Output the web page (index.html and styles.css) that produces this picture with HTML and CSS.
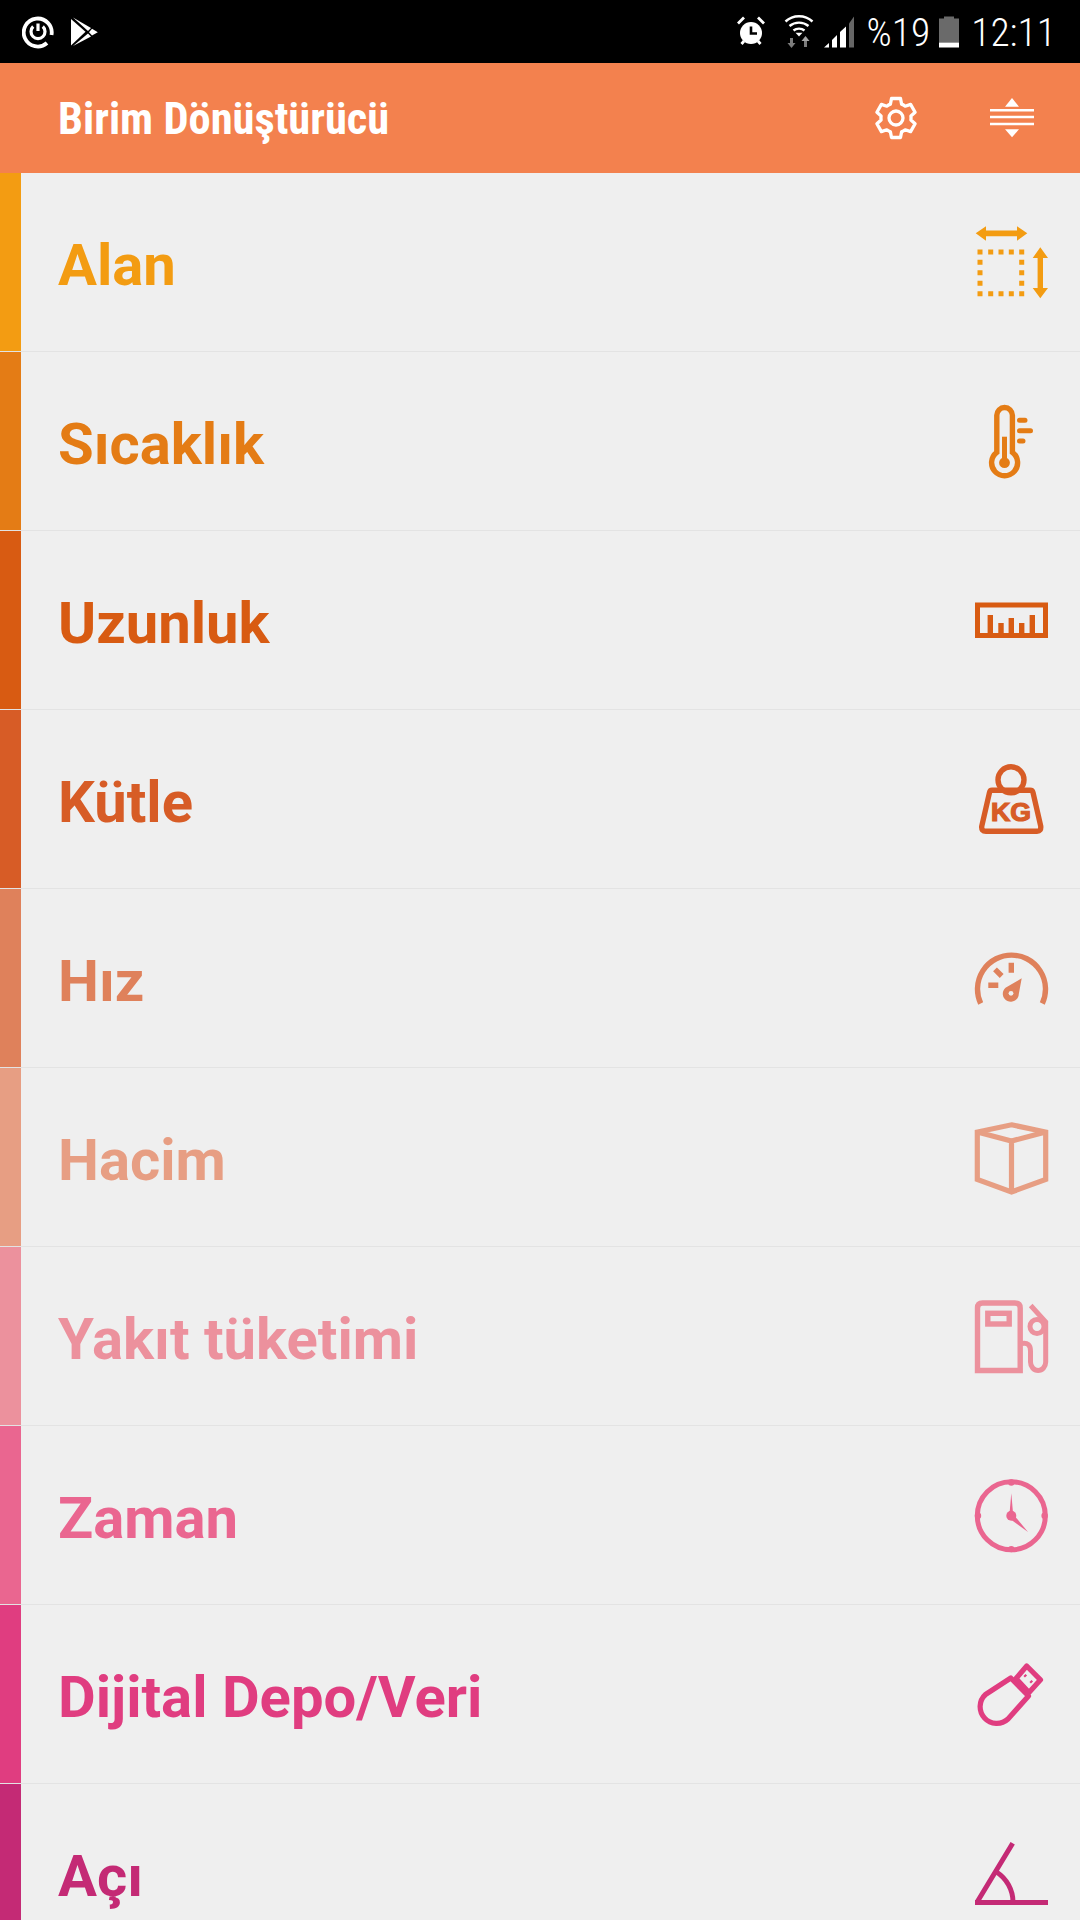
FILE: index.html
```html
<!DOCTYPE html>
<html lang="en">

<head>
  <meta charset="UTF-8">
  <meta name="viewport" content="width=device-width, initial-scale=1.0">
  <title>Birim Dönüştürücü</title>
  <link rel="stylesheet" href="styles.css">
</head>

<body>

  <div class="status-bar">
    <div class="status-left">
      <svg class="st-sync" width="32" height="36" viewBox="0 0 32 36">
        <path d="M25 29A14 14 0 1 1 29.500 21" fill="none" stroke="#fff" stroke-width="3.800"/>
        <path d="M11.200 12.500A7 7 0 1 0 20.800 12.500" fill="none" stroke="#fff" stroke-width="3.200"/>
        <path d="M16 9.500V17" fill="none" stroke="#fff" stroke-width="3.200"/>
      </svg>
      <svg class="st-play" width="30" height="36" viewBox="0 0 30 36">
        <polygon points="1,5 15.500,17.800 1,31.500" fill="#fff"/>
        <polygon points="3,3.500 21,14 18,17" fill="#fff"/>
        <polygon points="3,32 18,19.500 21,22.500" fill="#fff"/>
        <polygon points="22,14.800 27.800,18.200 22,21.500 19,18.200" fill="#fff"/>
      </svg>
    </div>
    <div class="status-right">
      <svg class="st-alarm" width="30" height="36" viewBox="0 0 30 36">
        <circle cx="15" cy="19" r="11" fill="#fff"/>
        <path d="M15 12.500V19.500H21" fill="none" stroke="#000" stroke-width="2.600"/>
        <path d="M2 9.500L8 3.500M28 9.500L22 3.500M5.500 30L8 27M24.500 30L22 27" fill="none" stroke="#fff" stroke-width="2.800"/>
      </svg>
      <svg class="st-wifi" width="34" height="36" viewBox="0 0 34 36">
        <path d="M3.500 7.500C11 .5 23 .5 30.500 7.500M7.500 12C13 7.500 21 7.500 26.500 12M11.500 16.500C14.500 14 19.500 14 22.500 16.500" fill="none" stroke="#fff" stroke-width="2.400"/>
        <polygon points="17,22.500 13.500,18.800 20.500,18.800" fill="#fff"/>
        <path d="M9.500 24V32M23.500 25V33" fill="none" stroke="#7c7c7c" stroke-width="3"/>
        <polygon points="5.500,29 13.500,29 9.500,34" fill="#7c7c7c"/>
        <polygon points="19.500,27 27.500,27 23.500,22" fill="#a5a5a5"/>
      </svg>
      <svg class="st-signal" width="34" height="36" viewBox="0 0 34 36">
        <polygon points="2,33.500 7,29 7,33.500" fill="#fff"/>
        <polygon points="10,33.500 10,26 15,21 15,33.500" fill="#fff"/>
        <polygon points="18,33.500 18,18 24,12.500 24,33.500" fill="#fff"/>
        <polygon points="27,33.500 27,9.500 32,2.500 32,33.500" fill="#666"/>
      </svg>
      <span class="st-text st-percent">%19</span>
      <svg class="st-battery" width="20" height="36" viewBox="0 0 20 36">
        <rect x="5" y="2.500" width="10" height="3" fill="#6a6a6a"/>
        <rect x="0" y="4.500" width="20" height="24" fill="#6a6a6a"/>
        <rect x="0" y="28.500" width="20" height="5" fill="#fff"/>
      </svg>
      <span class="st-text st-time">12:11</span>
    </div>
  </div>

  <div class="app-bar">
    <h1 class="app-title">Birim Dönüştürücü</h1>
    <svg class="bar-gear" width="46" height="46" viewBox="-23 -23 46 46" fill="none" stroke="#fff" stroke-width="3.300" stroke-linejoin="round">
      <path d="M-5.600 -13.900L-4.500 -19.500H4.500L5.600 -13.900A15 15 0 0 1 9.200 -11.800L14.600 -13.600L19.100 -5.800L14.900 -2.100A15 15 0 0 1 14.900 2.100L19.100 5.800L14.600 13.600L9.200 11.800A15 15 0 0 1 5.600 13.900L4.500 19.500H-4.500L-5.600 13.900A15 15 0 0 1 -9.200 11.800L-14.600 13.600L-19.100 5.800L-14.900 2.100A15 15 0 0 1 -14.900 -2.100L-19.100 -5.800L-14.600 -13.600L-9.200 -11.800A15 15 0 0 1 -5.600 -13.900Z"/>
      <circle r="7"/>
    </svg>
    <svg class="bar-sort" width="44" height="40" viewBox="0 0 44 40">
      <polygon points="22,0 15,8.700 29,8.700" fill="#fff"/>
      <path d="M0 12.300H44M0 19H44M0 26H44" stroke="#fff" stroke-width="2.600"/>
      <polygon points="15,31.300 29,31.300 22,39.300" fill="#fff"/>
    </svg>
  </div>

  <div class="list">

    <div class="row c-alan">
      <div class="stripe"></div>
      <span class="row-name">Alan</span>
      <svg class="row-icon" width="80" height="80" viewBox="0 0 80 80" fill="currentColor">
        <polygon points="3.700,11.300 14,4.300 14,8.600 45,8.600 45,4.300 55.300,11.300 45,18.700 45,14.200 14,14.200 14,18.700"/>
        <polygon points="68.300,25.300 76,36 71,36 71,66 76,66 68.300,76.300 60.700,66 65.600,66 65.600,36 60.700,36"/>
        <path d="M8 30h.01M18.700 30h.01M29 30h.01M39.300 30h.01M49.700 30h.01M8 40.300h.01M49.700 40.300h.01M8 50.700h.01M49.700 50.700h.01M8 61.300h.01M49.700 61.300h.01M8 71.700h.01M18.700 71.700h.01M29 71.700h.01M39.300 71.700h.01M49.700 71.700h.01" stroke="currentColor" stroke-width="5" stroke-linecap="square"/>
      </svg>
    </div>

    <div class="row c-sicaklik">
      <div class="stripe"></div>
      <span class="row-name">Sıcaklık</span>
      <svg class="row-icon" width="80" height="80" viewBox="0 0 80 80" fill="none" stroke="currentColor" stroke-width="5.400">
        <path d="M24.800 51.300V14.300a7.800 7.800 0 0 1 15.600 0V51.300A13 13 0 1 1 24.800 51.300Z"/>
        <path d="M32.500 35.700V61" stroke-width="5"/>
        <circle cx="32.500" cy="61.700" r="5.400" fill="currentColor" stroke="none"/>
        <path d="M47.500 19.300H53M47.500 29.700H58.500M47.500 40H51" stroke-width="5" stroke-linecap="round"/>
      </svg>
    </div>

    <div class="row c-uzunluk">
      <div class="stripe"></div>
      <span class="row-name">Uzunluk</span>
      <svg class="row-icon" width="80" height="80" viewBox="0 0 80 80" fill="none" stroke="currentColor" stroke-width="5">
        <rect x="5.500" y="25" width="68" height="30.500"/>
        <path d="M18.300 35V56M29 43V56M39.300 38V56M49.700 43V56M60.300 35V56" stroke-width="5.400"/>
      </svg>
    </div>

    <div class="row c-kutle">
      <div class="stripe"></div>
      <span class="row-name">Kütle</span>
      <svg class="row-icon" width="80" height="80" viewBox="0 0 80 80" fill="none" stroke="currentColor" stroke-width="5.400">
        <circle cx="39" cy="20.800" r="13"/>
        <path d="M20 31.300H58Q60.500 31.300 61 33.500L68.700 67Q69.300 72.300 65 72.300H14Q9 72.300 9.800 67L17.500 33.500Q18 31.300 20 31.300Z" stroke-linejoin="round"/>
        <text class="kg" x="19" y="62" textLength="40" lengthAdjust="spacingAndGlyphs">KG</text>
      </svg>
    </div>

    <div class="row c-hiz">
      <div class="stripe"></div>
      <span class="row-name">Hız</span>
      <svg class="row-icon" width="80" height="80" viewBox="0 0 80 80" fill="none" stroke="currentColor" stroke-width="5.400">
        <path d="M8.700 65.500A34 34 0 1 1 70.300 65.500"/>
        <path d="M39.300 24.700V34.700M23 31.300L29.700 38M16.300 47.300H26.300"/>
        <path d="M49.700 40.300L46.800 56A8 8 0 1 1 33.500 49.800Z" fill="currentColor" stroke="none"/>
        <circle class="hole" cx="39" cy="55.300" r="2.400"/>
      </svg>
    </div>

    <div class="row c-hacim">
      <div class="stripe"></div>
      <span class="row-name">Hacim</span>
      <svg class="row-icon" width="80" height="80" viewBox="0 0 80 80" fill="none" stroke="currentColor" stroke-width="5.200">
        <path d="M39.500 7.800L73.700 15V62.500L39.500 75L5.300 62.500V15ZM5.300 15L39.500 24L73.700 15M39.500 24V75"/>
      </svg>
    </div>

    <div class="row c-yakit">
      <div class="stripe"></div>
      <span class="row-name">Yakıt tüketimi</span>
      <svg class="row-icon" width="80" height="80" viewBox="0 0 80 80" fill="none" stroke="currentColor" stroke-width="5.400">
        <path d="M5.500 74.500V12Q5.500 7 10.500 7H43Q48.200 7 48.200 12V74.500Z"/>
        <rect x="15.800" y="17.300" width="21.400" height="10.700"/>
        <path d="M50 47.500Q58.500 46 58.500 55V66A7.600 8.500 0 0 0 73.700 66V26L58.700 9.500" stroke-width="5"/>
        <circle cx="65" cy="30.500" r="7" stroke-width="5"/>
      </svg>
    </div>

    <div class="row c-zaman">
      <div class="stripe"></div>
      <span class="row-name">Zaman</span>
      <svg class="row-icon" width="80" height="80" viewBox="0 0 80 80" fill="currentColor">
        <circle cx="39.300" cy="40.800" r="34" fill="none" stroke="currentColor" stroke-width="5"/>
        <circle cx="39.300" cy="7.500" r="3.200"/>
        <circle cx="72.600" cy="40.800" r="3.200"/>
        <circle cx="39.300" cy="74.100" r="3.200"/>
        <circle cx="6" cy="40.800" r="3.200"/>
        <circle cx="39.300" cy="40.800" r="5"/>
        <polygon points="39.300,18.200 41.200,40 37.400,40"/>
        <polygon points="56,57 37.500,43.500 41,39"/>
      </svg>
    </div>

    <div class="row c-dijital">
      <div class="stripe"></div>
      <span class="row-name">Dijital Depo/Veri</span>
      <svg class="row-icon" width="80" height="80" viewBox="0 0 80 80" fill="none" stroke="currentColor" stroke-width="5.200" stroke-linejoin="round">
        <path d="M38.800 24L56.500 42L36 65A16.500 16.500 0 0 1 13.500 40.500Z"/>
        <path d="M54.700 12L68.500 25.800L57 38.500L44 24.500Z"/>
        <path d="M52.500 21L54 22.500M58.500 27L60 28.500" stroke-width="3"/>
      </svg>
    </div>

    <div class="row c-aci">
      <div class="stripe"></div>
      <span class="row-name">Açı</span>
      <svg class="row-icon" width="80" height="80" viewBox="0 0 80 80" fill="none" stroke="currentColor" stroke-width="5">
        <path d="M3 69.500H76M5.300 68.700L40.700 10.300"/>
        <path d="M24.500 39A36 36 0 0 1 41 69"/>
      </svg>
    </div>

  </div>

</body>

</html>
```

FILE: styles.css
```css
body {
  font-family: 'Roboto', sans-serif;
  background-color: #efefef;
  margin: 0;
  padding: 0;
  height: 1920px;
  overflow: hidden;
}

.status-bar {
  height: 63px;
  background-color: #000;
  display: flex;
  align-items: center;
  justify-content: space-between;
  padding: 0 24px 0 22px;
}

.status-left,
.status-right {
  display: flex;
  align-items: center;
}

.st-play {
  margin-left: 16px;
}

.st-wifi {
  margin-left: 16px;
}

.st-signal {
  margin-left: 6px;
}

.st-text {
  color: #fff;
  font-size: 39.5px;
  font-weight: 300;
  line-height: 36px;
  font-stretch: 75%;
  padding-top: 2px;
}

.st-percent {
  margin-left: 11px;
}

.st-battery {
  margin-left: 9px;
}

.st-time {
  margin-left: 12px;
}

.app-bar {
  height: 110px;
  background-color: #f3814e;
  display: flex;
  align-items: center;
  padding-left: 58px;
}

.app-title {
  margin: 0;
  padding-top: 2px;
  color: #fff;
  font-size: 44.5px;
  font-weight: 700;
  font-stretch: 75%;
  flex: 1;
}

.bar-gear {
  margin-right: 71px;
}

.bar-sort {
  margin-right: 46px;
}

.list {
  display: flex;
  flex-direction: column;
}

.row {
  height: 178px;
  flex-shrink: 0;
  display: flex;
  align-items: center;
  border-bottom: 1px solid #e3e3e3;
}

.stripe {
  width: 21px;
  align-self: stretch;
  background-color: currentColor;
}

.row-name {
  flex: 1;
  margin-left: 37px;
  padding-top: 5px;
  font-size: 58px;
  font-weight: 700;
}

.row-icon {
  margin-right: 28px;
}

.kg {
  font-family: 'Liberation Sans', sans-serif;
  font-size: 25px;
  font-weight: 700;
  fill: currentColor;
  stroke: currentColor;
  stroke-width: 1.2px;
}

.hole {
  fill: #efefef;
  stroke: none;
}

.c-alan { color: #f39c12; }
.c-sicaklik { color: #e47c15; }
.c-uzunluk { color: #d85b12; }
.c-kutle { color: #d75c26; }
.c-hiz { color: #df815b; }
.c-hacim { color: #e79e83; }
.c-yakit { color: #ec919d; }
.c-zaman { color: #ea6690; }
.c-dijital { color: #e03d80; }
.c-aci { color: #c42a75; }
```
